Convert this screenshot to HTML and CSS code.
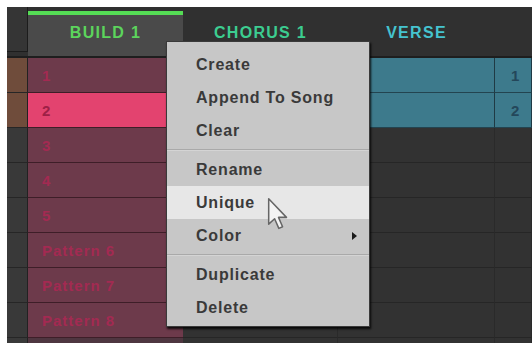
FILE: index.html
```html
<!DOCTYPE html>
<html lang="en">
<head>
  <meta charset="UTF-8">
  <title>Arranger - Scene Menu</title>
  <link rel="stylesheet" href="styles.css">
</head>
<body>
<div class="screen">
  <!--Scene header-->
  <div class="header">
    <div class="corner"></div>
    <div class="scene active build">BUILD 1</div>
    <div class="scene chorus">CHORUS 1</div>
    <div class="scene verse">VERSE</div>
    <div class="scene"></div>
  </div>

  <!--Pattern grid-->
  <div class="grid">
    <div class="lane orange"></div>
    <div class="cell pat">1</div>
    <div class="cell"></div>
    <div class="cell teal">1</div>
    <div class="cell teal">1</div>

    <div class="lane orange"></div>
    <div class="cell pat hot">2</div>
    <div class="cell"></div>
    <div class="cell teal">2</div>
    <div class="cell teal">2</div>

    <div class="lane"></div>
    <div class="cell pat">3</div>
    <div class="cell"></div>
    <div class="cell"></div>
    <div class="cell"></div>

    <div class="lane"></div>
    <div class="cell pat">4</div>
    <div class="cell"></div>
    <div class="cell"></div>
    <div class="cell"></div>

    <div class="lane"></div>
    <div class="cell pat">5</div>
    <div class="cell"></div>
    <div class="cell"></div>
    <div class="cell"></div>

    <div class="lane"></div>
    <div class="cell pat">Pattern 6</div>
    <div class="cell"></div>
    <div class="cell"></div>
    <div class="cell"></div>

    <div class="lane"></div>
    <div class="cell pat">Pattern 7</div>
    <div class="cell"></div>
    <div class="cell"></div>
    <div class="cell"></div>

    <div class="lane"></div>
    <div class="cell pat">Pattern 8</div>
    <div class="cell"></div>
    <div class="cell"></div>
    <div class="cell"></div>

    <div class="lane"></div>
    <div class="cell pat dim"></div>
    <div class="cell"></div>
    <div class="cell"></div>
    <div class="cell"></div>
  </div>

  <!--Context menu-->
  <div class="menu">
    <div class="item">Create</div>
    <div class="item">Append To Song</div>
    <div class="item">Clear</div>
    <div class="sep"></div>
    <div class="item">Rename</div>
    <div class="item hover">Unique</div>
    <div class="item">Color <span class="arrow"></span></div>
    <div class="sep"></div>
    <div class="item">Duplicate</div>
    <div class="item">Delete</div>
  </div>

  <svg class="cursor" width="22" height="34" viewBox="0 0 13 20">
    <path d="M1 1 L1 16 L4.5 12.8 L7 18.5 L9.2 17.5 L6.8 12 L11.5 12 Z" fill="#f4f4f4" stroke="#666" stroke-width="0.9" stroke-linejoin="round"/>
  </svg>
</div>
</body>
</html>
```

FILE: styles.css
```css
body {
  margin: 0;
  width: 532px;
  height: 343px;
  overflow: hidden;
  background: #fff;
  font-family: "Liberation Sans", Arial, sans-serif;
  font-weight: bold;
}

.screen {
  position: relative;
  margin: 7px 0 0 7px;
  height: 336px;
  background: #323232;
  overflow: hidden;
}

/* header */
.header {
  display: grid;
  grid-template-columns: 21px 155px 155px 157px 1fr;
  height: 49px;
  background: #303030;
  border-bottom: 2px solid #1e1e1e;
}

.corner {
  height: 45px;
  background: #353535;
  border-right: 1px solid #1c1c1c;
  border-bottom: 1px solid #1c1c1c;
  box-sizing: border-box;
}

.scene {
  display: flex;
  align-items: center;
  justify-content: center;
  padding-top: 2px;
  font-size: 16px;
  letter-spacing: 1.3px;
}

.scene.active {
  margin-top: 4px;
  border-top: 4px solid #55dd55;
  background: #4a4a4a;
  padding-top: 0;
  padding-bottom: 6px;
}

.build { color: #5cd45c; }
.chorus { color: #3ccd90; }
.verse { color: #45c3cf; }

/* grid */
.grid {
  display: grid;
  grid-template-columns: 21px 155px 155px 157px 1fr;
  grid-auto-rows: 35px;
}

.lane {
  background: #393939;
  border-right: 1px solid #222;
  border-bottom: 1px solid #262626;
}

.lane.orange {
  background: #6f4c3b;
}

.cell {
  display: flex;
  align-items: center;
  padding-left: 14px;
  background: #323232;
  border-right: 1px solid #2a2a2a;
  border-bottom: 1px solid #262626;
  font-size: 15px;
  letter-spacing: 1px;
}

.cell.pat {
  background: #6d3a4b;
  color: #a32a52;
  border-right: none;
  border-bottom: 1px solid #3e1e28;
}

.cell.pat.hot {
  background: #e3436f;
  color: #9e2046;
}

.cell.pat.dim {
  background: #4e3640;
}

.cell.teal {
  background: #3d7a8c;
  color: #24475a;
  padding-left: 16px;
  border-right: 1px solid #1f3a44;
  border-bottom: 1px solid #234450;
}

/* context menu */
.menu {
  position: absolute;
  left: 159px;
  top: 34px;
  width: 202px;
  padding: 6px 0 2px;
  background: #c7c7c7;
  border: 1px solid #3a3a3a;
  box-shadow: 1px 2px 2px rgba(0, 0, 0, 0.85);
}

.item {
  display: flex;
  align-items: center;
  height: 33px;
  padding-left: 29px;
  padding-right: 12px;
  color: #3a3a3a;
  font-size: 16px;
  letter-spacing: 0.8px;
}

.item.hover {
  background: #e7e7e7;
}

.sep {
  height: 1px;
  margin: 2px 0 2px;
  background: #a9a9a9;
  border-bottom: 1px solid #d4d4d4;
}

.arrow {
  margin-left: auto;
  width: 0;
  height: 0;
  border-top: 4px solid transparent;
  border-bottom: 4px solid transparent;
  border-left: 5px solid #1a1a1a;
}

.cursor {
  position: absolute;
  left: 260px;
  top: 190px;
}
```
